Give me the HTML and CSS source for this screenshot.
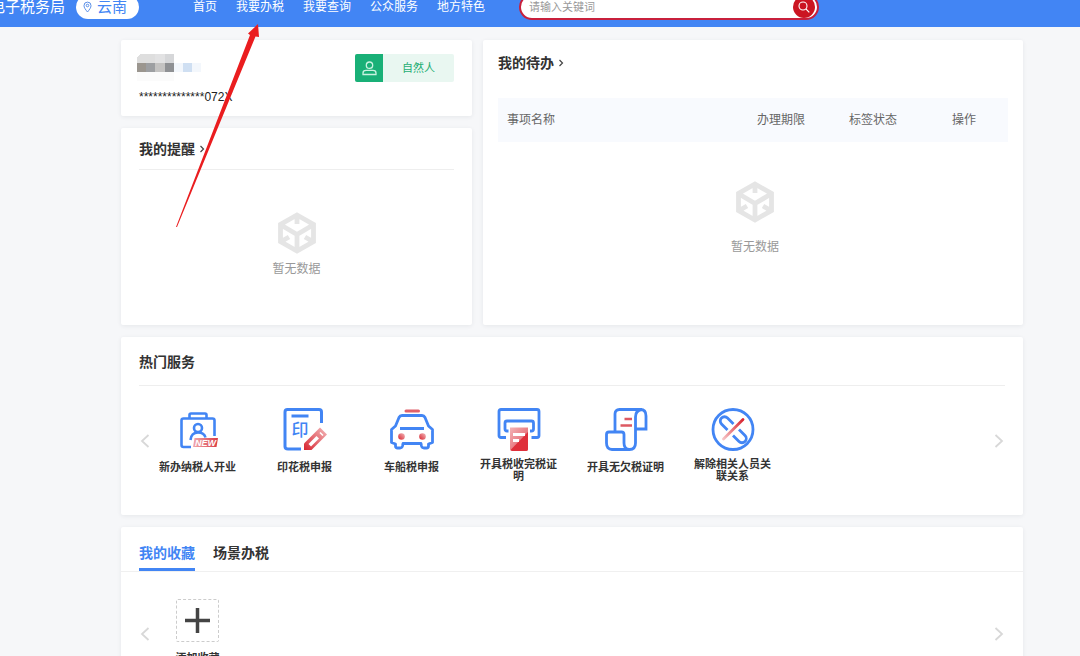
FILE: index.html
```html
<!DOCTYPE html>
<html lang="zh-CN">
<head>
<meta charset="utf-8">
<title>电子税务局</title>
<link rel="stylesheet" href="styles.css">
</head>
<body>
<svg class="defs" width="0" height="0" aria-hidden="true">
  <defs>
    <linearGradient id="red" x1="0" y1="0" x2="1" y2="1"><stop offset="0" stop-color="#f3b3b6"/><stop offset="1" stop-color="#e0505a"/></linearGradient>
    <linearGradient id="redFlat" x1="0" y1="0" x2="1" y2="0"><stop offset="0" stop-color="#f0a9ad"/><stop offset="1" stop-color="#d93a44"/></linearGradient>
    <linearGradient id="redUp" x1="0" y1="1" x2="1" y2="0"><stop offset="0" stop-color="#f6c3c5"/><stop offset="1" stop-color="#d8242f"/></linearGradient>
    <linearGradient id="redDown" x1="1" y1="0" x2="0" y2="1"><stop offset="0" stop-color="#f3b9bb"/><stop offset="1" stop-color="#d8242f"/></linearGradient>
    <symbol id="cube" viewBox="0 0 38 42">
      <path d="M19 3 35.500 12.500V29.500L19 39 2.500 29.500V12.500Z M3 13 19 22.500 35 13 M19 22.500V38 M19 4V12 M4 29 11 25 M34 29 27 25" fill="none" stroke="#e5e5e5" stroke-width="4.800"/>
    </symbol>
    <symbol id="more" viewBox="0 0 6 8"><path d="M1.500 1 4.500 4 1.500 7" fill="none" stroke="#444" stroke-width="1.200"/></symbol>
    <symbol id="prev" viewBox="0 0 10 14"><path d="M8.500 1 2 7 8.500 13" fill="none" stroke="#d8d8d8" stroke-width="1.800"/></symbol>
    <symbol id="next" viewBox="0 0 10 14"><path d="M1.500 1 8 7 1.500 13" fill="none" stroke="#d8d8d8" stroke-width="1.800"/></symbol>
  </defs>
</svg>

<header class="topbar">
  <div class="brand">电子税务局</div>
  <button class="region" type="button">
    <svg width="9" height="12" viewBox="0 0 9 12" fill="none" stroke="#5a8fe8"><path d="M4.500 11C2.500 8.500 1 6.700 1 4.600a3.500 3.500 0 0 1 7 0C8 6.700 6.500 8.500 4.500 11Z"/><circle cx="4.500" cy="4.500" r="1.300"/></svg>
    <span>云南</span>
  </button>
  <nav class="nav">
    <a href="#">首页</a><a href="#">我要办税</a><a href="#">我要查询</a><a href="#">公众服务</a><a href="#">地方特色</a>
  </nav>
  <form class="search">
    <input class="search-input" type="text" placeholder="请输入关键词" aria-label="请输入关键词">
    <button class="search-btn" type="button" aria-label="搜索">
      <svg width="12" height="12" viewBox="0 0 12 12" fill="none" stroke="#fff" stroke-width="1.100"><circle cx="5" cy="5" r="4"/><path d="m8 8 3.300 3.300"/></svg>
    </button>
  </form>
</header>

<main class="page">
  <div class="overview">
    <section class="card user">
      <div class="user-info">
        <svg class="masked-name" width="64" height="27" viewBox="0 0 64 27" shape-rendering="crispEdges" aria-hidden="true">
          <path fill="#dedede" d="M3 0H18V9H0V3Z"/><path fill="#e2e2e3" d="M18 0H28V9H18Z"/><path fill="#d6d7d9" d="M28 0H37V9H28Z"/>
          <path fill="#9b968f" d="M0 9H9V18H0Z"/><path fill="#9d9fa2" d="M9 9H18V18H9Z"/><path fill="#c4c3c2" d="M18 9H28V18H18Z"/><path fill="#8f9194" d="M28 9H37V18H28Z"/>
          <path fill="#f3f7fc" d="M37 9H46V18H37Z M55 9H64V18H55Z"/><path fill="#cfdff2" d="M46 9H55V18H46Z"/><path fill="#fbfbfb" d="M0 18H37V27H0Z"/>
        </svg>
        <div class="user-id">**************072X</div>
      </div>
      <div class="tag">
        <span class="tag-icon"><svg width="15" height="15" viewBox="0 0 15 15" fill="none" stroke="#c9f2e0" stroke-width="1.300"><circle cx="7.500" cy="4.200" r="3.200"/><path d="M1 13.500V12c0-1.800 1.200-2.600 3-2.600h7c1.800 0 3 .8 3 2.600v1.500Z"/></svg></span>
        <span class="tag-text">自然人</span>
      </div>
    </section>

    <section class="card remind">
      <h2 class="title title-ruled">我的提醒<svg width="6" height="8"><use href="#more"/></svg></h2>
      <div class="empty empty-remind"><svg width="38" height="42"><use href="#cube"/></svg><span>暂无数据</span></div>
    </section>

    <section class="card todo">
      <h2 class="title">我的待办<svg width="6" height="8"><use href="#more"/></svg></h2>
      <table class="todo-table">
        <thead><tr><th class="col-name">事项名称</th><th class="col-date">办理期限</th><th class="col-tag">标签状态</th><th class="col-op">操作</th></tr></thead>
      </table>
      <div class="empty empty-todo"><svg width="38" height="42"><use href="#cube"/></svg><span>暂无数据</span></div>
    </section>
  </div>

  <section class="card services">
    <h2 class="title title-ruled">热门服务</h2>
    <div class="carousel">
      <button class="arrow" type="button" aria-label="上一页"><svg width="10" height="14"><use href="#prev"/></svg></button>
      <div class="items">
        <a class="item" href="#">
          <svg width="44" height="44" viewBox="0 0 44 44" fill="none" stroke="#4285f4" stroke-width="2.600">
            <path d="M15 40H7.500Q5.500 40 5.500 38V13.500Q5.500 11.500 7.500 11.500H36.500Q38.500 11.500 38.500 13.500V29 M13.500 11V8Q13.500 6.500 15 6.500H29Q30.500 6.500 30.500 8V11"/>
            <circle cx="22" cy="21" r="4"/><path d="M14.500 33C15 28 18 25.500 22 25.500S28.500 27 29.500 30.500"/>
            <path d="M18.500 31H42L40.500 40H17Z" fill="url(#redFlat)" stroke="none"/>
            <text x="29.500" y="39" class="svg-new">NEW</text>
          </svg>
          <span class="label">新办纳税人开业</span>
        </a>
        <a class="item" href="#">
          <svg width="44" height="44" viewBox="0 0 44 44" fill="none" stroke="#4285f4" stroke-width="3">
            <path d="M18 42H5Q2 42 2 39.500V5Q2 2.500 4.500 2.500H36Q38.500 2.500 38.500 5V16 M8.500 9H25.500"/>
            <text x="17" y="29" class="svg-seal">印</text>
            <path d="M21 43V36.500L37 20.500 44 27.500 28.500 43Z" fill="url(#redDown)" stroke="none"/>
            <path d="M25.500 37 33.500 29 36 31.500 28 39.500Z" fill="#fff" stroke="none"/><path d="M37 25.500 40 28.500" stroke="#fff" stroke-width="1.600"/>
          </svg>
          <span class="label">印花税申报</span>
        </a>
        <a class="item" href="#">
          <svg width="44" height="44" viewBox="0 0 44 44" fill="none" stroke="#4285f4" stroke-width="2.800" stroke-linejoin="round">
            <path d="M16 4H28.500" stroke="#e0616a" stroke-width="3" stroke-linecap="round"/>
            <path d="M12 8.500H32Q34 8.500 35 10.500L38.500 19 42.500 22.500V35.500L38.500 37V39Q38.500 41 36.500 41H34Q32 41 31.500 39L31 36.500H13L12.500 39Q12 41 10 41H7.500Q5.500 41 5.500 39V37L1.500 35.500V22.500L5.500 19 9 10.500Q10 8.500 12 8.500Z M10 21.500H34"/>
            <circle cx="11.500" cy="29.500" r="3.300" fill="url(#redDown)" stroke="none"/><circle cx="32.500" cy="29.500" r="3.300" fill="url(#redDown)" stroke="none"/>
          </svg>
          <span class="label">车船税申报</span>
        </a>
        <a class="item" href="#">
          <svg width="44" height="44" viewBox="0 0 44 44" fill="none" stroke="#4285f4" stroke-width="2.800">
            <path d="M9 30.500H4Q2 30.500 2 28.500V4.500Q2 2.500 4 2.500H40Q42 2.500 42 4.500V28.500Q42 30.500 40 30.500H34.500 M11.500 24H10Q8 24 8 22V16Q8 14 10 14H34.500Q36.500 14 36.500 16V22Q36.500 24 34.500 24H33"/>
            <path d="M13 20.500H31V42Q31 44 29 44H15Q13 44 13 42Z" fill="url(#red)" stroke="none"/><path d="M13.500 43 31 25V42Q31 44 29 44H15Z" fill="#df303b" stroke="none"/>
            <path d="M16 27.500H28 M16 33.500H22" stroke="#fff" stroke-width="2.800"/>
          </svg>
          <span class="label">开具税收完税证明</span>
        </a>
        <a class="item" href="#">
          <svg width="44" height="44" viewBox="0 0 44 44" fill="none" stroke="#4285f4" stroke-width="2.800">
            <path d="M11 25V7Q11 2.500 15.500 2.500H36.500Q42 2.500 42 9V22H32.500 M37.500 2.500Q31.500 3.500 31.500 10V36Q31.500 42.500 25.500 42.500H8Q2.500 42.500 2.500 36V27.500Q2.500 25 5 25H17.500Q20 25 20 27.500V36Q20 42.500 25.500 42.500"/>
            <path d="M20.500 12H28 M16.500 18.500H28" stroke="#dd5962" stroke-width="2.400"/>
          </svg>
          <span class="label">开具无欠税证明</span>
        </a>
        <a class="item" href="#">
          <svg width="44" height="44" viewBox="0 0 44 44" fill="none" stroke="#4285f4" stroke-width="2.800">
            <circle cx="22" cy="22.500" r="20"/>
            <path d="M16.500 23 10.500 17A4.200 4.200 0 0 1 16.500 11L22.500 17 M28 22.500 34 28.500A4.200 4.200 0 0 1 28 34.500L22 28.500"/>
            <path d="M12.500 32 32 12.500" stroke="url(#redUp)" stroke-linecap="round"/>
          </svg>
          <span class="label">解除相关人员关联关系</span>
        </a>
      </div>
      <button class="arrow" type="button" aria-label="下一页"><svg width="10" height="14"><use href="#next"/></svg></button>
    </div>
  </section>

  <section class="card favorites">
    <div class="tabs" role="tablist">
      <button class="tab tab-active" type="button" role="tab" aria-selected="true">我的收藏</button>
      <button class="tab" type="button" role="tab" aria-selected="false">场景办税</button>
    </div>
    <div class="carousel carousel-fav">
      <button class="arrow" type="button" aria-label="上一页"><svg width="10" height="14"><use href="#prev"/></svg></button>
      <div class="items">
        <a class="item" href="#">
          <span class="add-box"><svg width="25" height="25" viewBox="0 0 25 25" stroke="#444" stroke-width="3.500"><path d="M12.500 0V25M0 12.500H25"/></svg></span>
          <span class="label">添加收藏</span>
        </a>
      </div>
      <button class="arrow" type="button" aria-label="下一页"><svg width="10" height="14"><use href="#next"/></svg></button>
    </div>
  </section>
</main>

<svg class="pointer" width="84" height="206" viewBox="0 0 84 206" aria-hidden="true"><path d="M0 203 74 11 72 9.500 82 0 83 13 79.500 12.500 1 203Z" fill="#ea1d1f"/></svg>
</body>
</html>
```
FILE: styles.css
```css
* { box-sizing: border-box; }

body {
  margin: 0;
  height: 100vh;
  overflow: hidden;
  position: relative;
  background: #f6f7f9;
  color: #333;
  font-family: "Liberation Sans", "Noto Sans CJK SC", sans-serif;
  font-size: 12px;
  line-height: 16px;
}

svg { display: block; flex: none; }
a { color: inherit; text-decoration: none; }
button { border: 0; padding: 0; background: none; font: inherit; color: inherit; cursor: pointer; }
.defs { position: absolute; }

.topbar {
  display: flex;
  align-items: center;
  height: 40px;
  margin-top: -13px;
  background: #4285f4;
  color: #fff;
}
.brand { margin-left: -10px; font-size: 15px; white-space: nowrap; }
.region {
  display: flex;
  align-items: center;
  gap: 5px;
  height: 24px;
  margin-left: 11px;
  padding: 0 12px 0 7px;
  border-radius: 12px;
  background: #fff;
  color: #4285f4;
  font-size: 15px;
}
.nav { display: flex; gap: 19px; margin-left: 54px; white-space: nowrap; }
.search {
  display: flex;
  align-items: center;
  width: 300px;
  height: 26px;
  margin-left: 34px;
  padding: 0 2px 0 8px;
  border: 2px solid #c8203c;
  border-radius: 13px;
  background: #fff;
}
.search-input {
  flex: 1;
  min-width: 0;
  padding: 0;
  border: 0;
  outline: 0;
  background: none;
  font: inherit;
  font-size: 11px;
}
.search-input::placeholder { color: #999; }
.search-btn {
  display: grid;
  place-items: center;
  width: 22px;
  height: 22px;
  border-radius: 50%;
  background: #cb1522;
}

.page {
  display: flex;
  flex-direction: column;
  gap: 12px;
  padding: 13px 57px 0 121px;
}
.card {
  border-radius: 2px;
  background: #fff;
  box-shadow: 0 1px 4px rgba(40, 50, 70, 0.08);
}
.overview {
  display: grid;
  grid-template-columns: 351fr 540fr;
  grid-template-rows: auto 1fr;
  gap: 12px 11px;
}
.todo { grid-column: 2; grid-row: 1 / 3; padding: 0 15px; }

.user { display: flex; justify-content: space-between; align-items: flex-start; padding: 14px 18px 11px 16px; }
.user-info { display: flex; flex-direction: column; gap: 8px; }
.user-id { padding-left: 2px; color: #222; }
.tag { display: flex; height: 28px; border-radius: 2px; overflow: hidden; background: #e9f7f1; color: #1fae74; font-size: 11px; }
.tag-icon { display: grid; place-items: center; width: 28px; background: #19b077; }
.tag-text { padding: 6px 19px; }

.title { display: flex; align-items: center; gap: 4px; height: 46px; margin: 0; font-size: 14px; font-weight: 700; }
.remind { padding: 0 18px 47px; }
.remind .title { height: 42px; }
.services .title { height: 49px; padding-top: 2px; }
.title-ruled { border-bottom: 1px solid #eee; }

.empty { display: flex; flex-direction: column; align-items: center; color: #999; }
.empty-remind { gap: 7px; padding-top: 42px; }
.empty-todo { gap: 16px; padding: 39px 0 70px 4px; }

.todo-table {
  width: 100%;
  margin-top: 12px;
  border-collapse: collapse;
  table-layout: fixed;
  background: #f8fafe;
  color: #666;
}
.todo-table th { height: 44px; padding: 0; font-weight: 400; }
.todo-table .col-name { padding-left: 9px; text-align: left; }
.col-date { width: 90px; }
.col-tag { width: 94px; }
.col-op { width: 88px; }

.services { padding: 0 18px 20px; }
.carousel { display: flex; align-items: center; }
.arrow { display: flex; justify-content: center; width: 12px; flex: none; }
.items { display: flex; flex: 1; gap: 16px; padding: 21px 0 13px 1px; }
.item { display: flex; flex-direction: column; align-items: center; gap: 7px; width: 91px; padding: 0 5px; }
.label {
  display: flex;
  align-items: center;
  min-height: 18px;
  font-size: 11px;
  font-weight: 700;
  line-height: 12px;
  text-align: center;
}
.svg-new { fill: #fff; stroke: none; font: italic 700 9px "Liberation Sans", sans-serif; text-anchor: middle; }
.svg-seal { fill: #4285f4; stroke: none; font: 500 17px "Noto Sans CJK SC", sans-serif; text-anchor: middle; }

.tabs { display: flex; gap: 18px; padding: 0 18px; border-bottom: 1px solid #f0f0f0; }
.tab { height: 44px; padding: 13px 0 3px; border-bottom: 3px solid transparent; font-size: 14px; font-weight: 700; }
.tab-active { border-bottom-color: #4285f4; color: #4285f4; }
.carousel-fav { padding: 0 18px; }
.carousel-fav .items { padding: 27px 0 28px 1px; }
.add-box { display: grid; place-items: center; width: 43px; height: 43px; border: 1px dashed #ccc; border-radius: 2px; }

.pointer { position: absolute; left: 176px; top: 24px; pointer-events: none; }
```
